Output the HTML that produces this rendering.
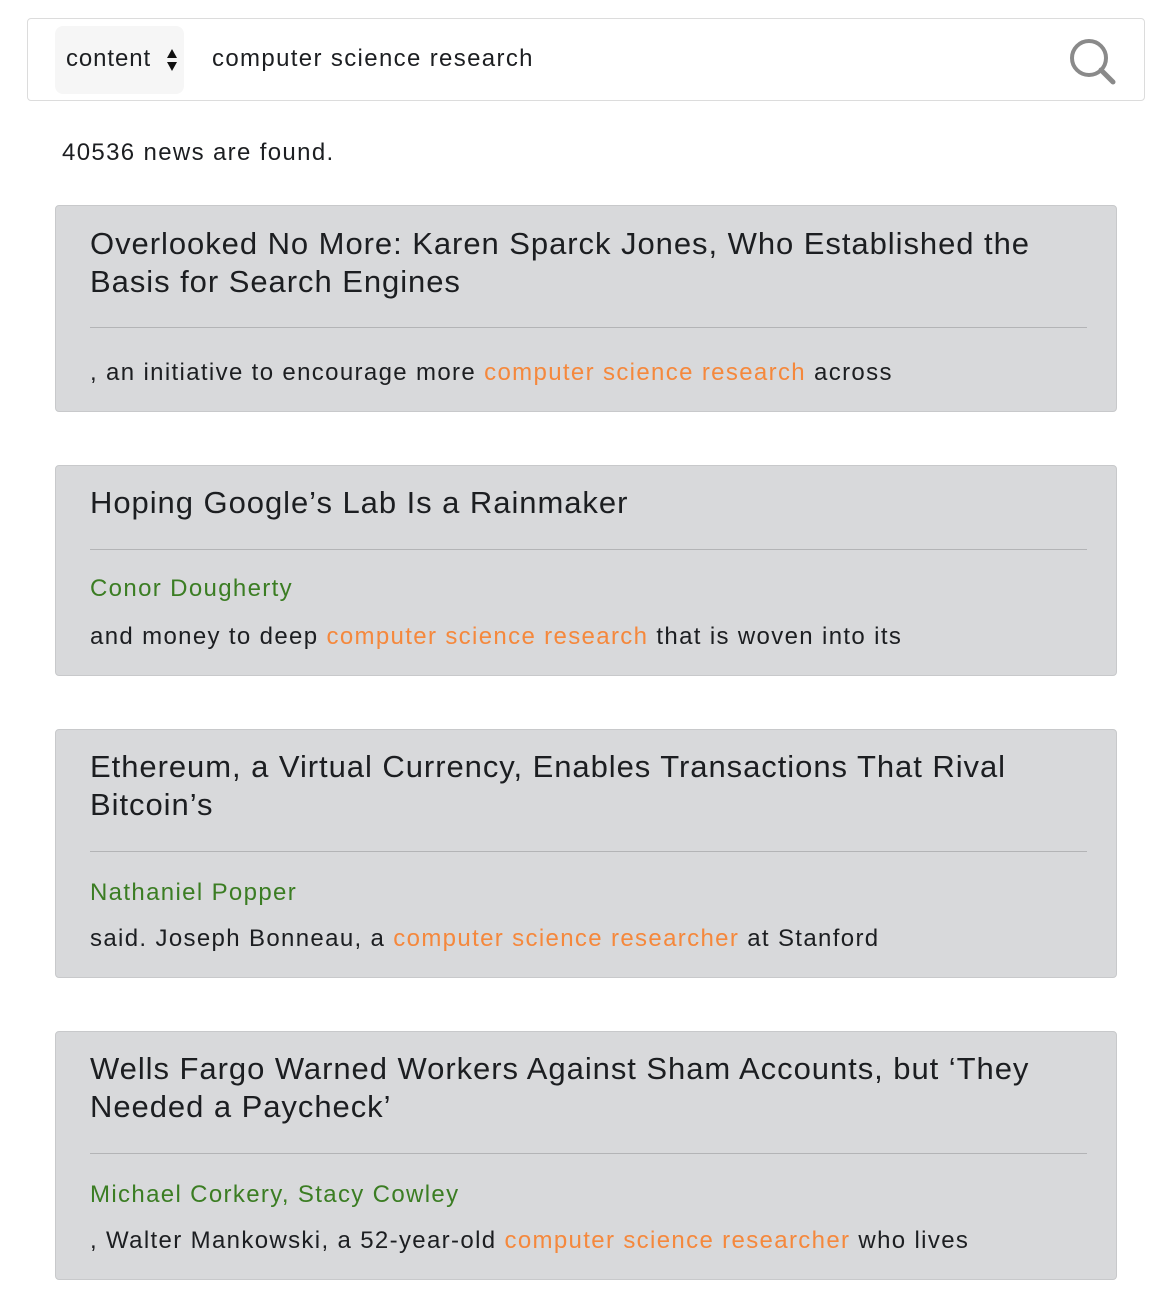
<!DOCTYPE html>
<html><head><meta charset="utf-8"><style>
body{margin:0;background:#fff;font-family:"Liberation Sans",sans-serif;color:#1c1e21;width:1172px;height:1304px;position:relative;overflow:hidden;letter-spacing:1.35px}
.abs{position:absolute}
.search{left:27px;top:18px;width:1116px;height:81px;border:1px solid #dcdcdc;border-radius:4px}
.sel{left:55px;top:26px;width:129px;height:68px;background:#f6f6f6;border-radius:8px}
.card{position:absolute;left:55px;width:1060px;background:#d8d9db;border:1px solid #c8c9cb;border-radius:4px}
.t{position:absolute;left:34px;font-size:31px;line-height:38px;width:1020px;white-space:nowrap;letter-spacing:0.95px}
.hr{position:absolute;left:34px;width:997px;height:1px;background:#b3b4b6}
.l{position:absolute;left:34px;font-size:24px;line-height:32px;white-space:nowrap}
.g{color:#3b7d23}.o{color:#f5883c}
</style></head><body>
<div class="abs search"></div>
<div class="abs sel"></div>
<div class="abs" style="left:66px;top:43px;font-size:24px;line-height:32px;letter-spacing:0.9px">content</div>
<svg class="abs" style="left:166px;top:47px" width="12" height="26" viewBox="0 0 12 26"><path d="M6 2L11 11H1Z M6 24L11 15H1Z" fill="#111"/></svg>
<div class="abs" style="left:212px;top:43px;font-size:24px;line-height:32px">computer science research</div>
<svg class="abs" style="left:1066px;top:36px" width="52" height="50" viewBox="0 0 52 50"><circle cx="23" cy="22" r="17" fill="none" stroke="#8a8a8a" stroke-width="4"/><path d="M35 34L47 46" stroke="#8a8a8a" stroke-width="5" stroke-linecap="round"/></svg>
<div class="abs" style="left:62px;top:137px;font-size:24px;line-height:32px">40536 news are found.</div>

<div class="card" style="top:205px;height:205px">
<div class="t" style="top:19px">Overlooked No More: Karen Sparck Jones, Who Established the<br>Basis for Search Engines</div>
<div class="hr" style="top:121px"></div>
<div class="l" style="top:151px">, an initiative to encourage more <span class="o">computer science research</span> across</div>
</div>

<div class="card" style="top:465px;height:209px">
<div class="t" style="top:18px">Hoping Google’s Lab Is a Rainmaker</div>
<div class="hr" style="top:83px"></div>
<div class="l g" style="top:107px">Conor Dougherty</div>
<div class="l" style="top:155px">and money to deep <span class="o">computer science research</span> that is woven into its</div>
</div>

<div class="card" style="top:729px;height:247px">
<div class="t" style="top:18px">Ethereum, a Virtual Currency, Enables Transactions That Rival<br>Bitcoin’s</div>
<div class="hr" style="top:121px"></div>
<div class="l g" style="top:147px">Nathaniel Popper</div>
<div class="l" style="top:193px">said. Joseph Bonneau, a <span class="o">computer science researcher</span> at Stanford</div>
</div>

<div class="card" style="top:1031px;height:247px">
<div class="t" style="top:18px">Wells Fargo Warned Workers Against Sham Accounts, but ‘They<br>Needed a Paycheck’</div>
<div class="hr" style="top:121px"></div>
<div class="l g" style="top:147px">Michael Corkery, Stacy Cowley</div>
<div class="l" style="top:193px">, Walter Mankowski, a 52-year-old <span class="o">computer science researcher</span> who lives</div>
</div>
</body></html>
